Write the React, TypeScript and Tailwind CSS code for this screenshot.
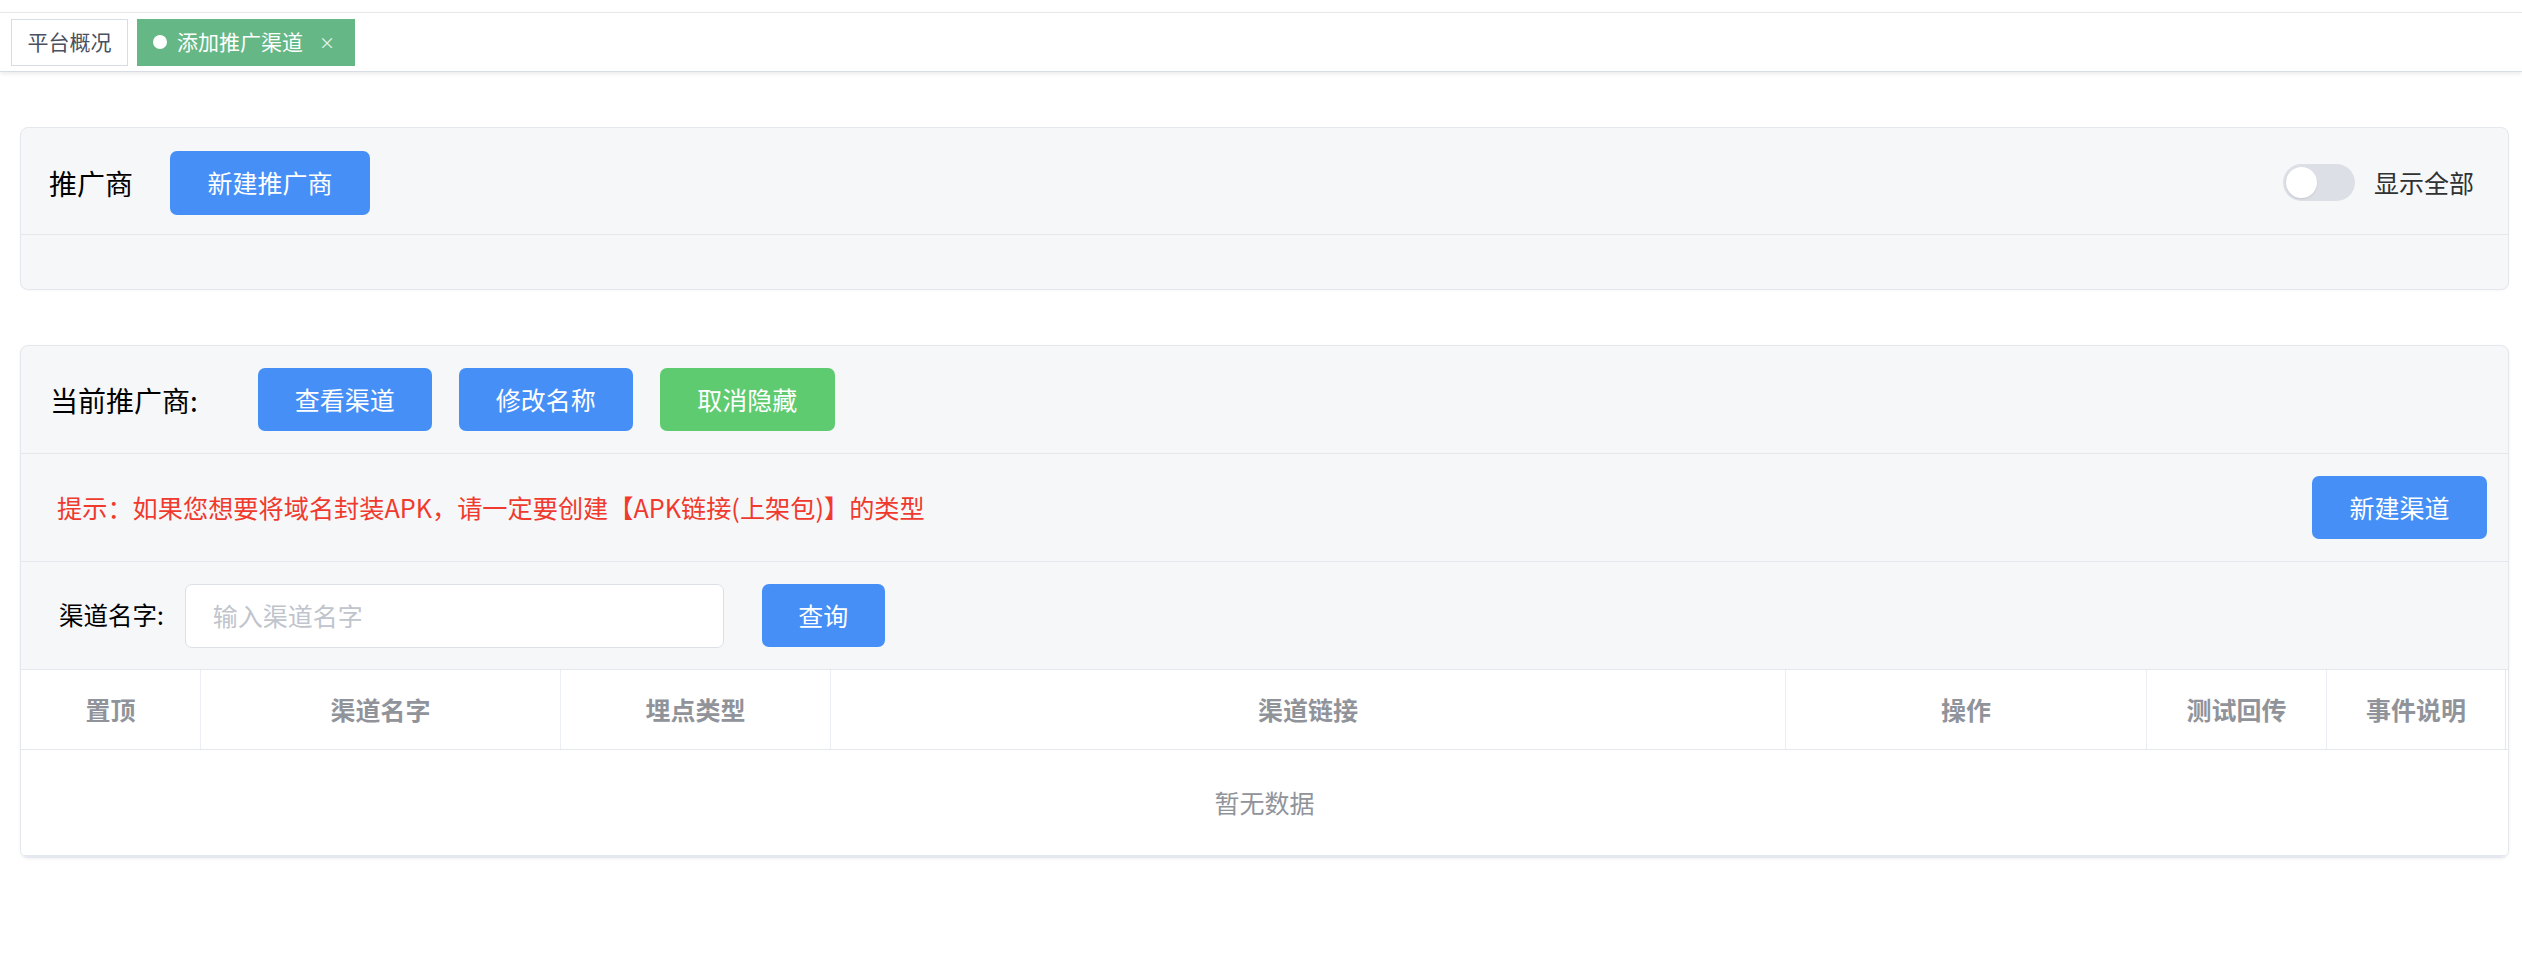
import React from "react";

const FONT = { fontFamily: '"Noto Sans CJK SC", "Noto Sans", sans-serif' };

function Btn({ children, w, color = "blue" }: { children: React.ReactNode; w: string; color?: "blue" | "green" }) {
  return (
    <button
      className={`${w} h-[63px] rounded-[7px] text-white text-[25px] leading-none flex items-center justify-center ${
        color === "blue" ? "bg-[#468ff7]" : "bg-[#5ecb70]"
      }`}
    >
      {children}
    </button>
  );
}

const cols = ["置顶", "渠道名字", "埋点类型", "渠道链接", "操作", "测试回传", "事件说明"];

export default function App() {
  return (
    <div className="w-[2522px] h-[954px] bg-white text-[#000]" style={FONT}>
      <div className="h-3" />
      {/* tab bar */}
      <div className="h-[60px] bg-white border-t border-[#e6e8ec] border-b border-b-[#d8dce5] shadow-[0_2px_4px_rgba(0,0,0,0.08)] flex items-center pl-[11px] gap-[9px]">
        <div className="h-[47px] w-[117px] border border-[#d8dce5] bg-white flex items-center justify-center text-[21px] text-[#495060]">
          平台概况
        </div>
        <div className="h-[47px] w-[218px] bg-[#65b786] flex items-center pl-[16px] text-[21px] text-white">
          <span className="w-[14px] h-[14px] rounded-full bg-white mr-[10px]" />
          <span>添加推广渠道</span>
          <span className="ml-[16px] text-[16px] leading-none text-[#e8f5ed]">×</span>
        </div>
      </div>

      <div className="ml-[20px] mr-[13px] mt-[55px] flex flex-col gap-[55px]">
        {/* card 1 */}
        <div className="border border-[#e4e7ed] rounded-[8px] bg-[#f6f7f9] shadow-[0_1px_2px_rgba(0,0,0,0.03)]">
          <div className="h-[107px] pt-[3px] border-b border-[#e4e7ed] flex items-center pl-[28px] pr-[34px]">
            <span className="text-[28px] leading-none">推广商</span>
            <div className="ml-[37px]">
              <button className="w-[200px] h-[64px] rounded-[7px] bg-[#468ff7] text-white text-[25px] leading-none">新建推广商</button>
            </div>
            <div className="ml-auto flex items-center">
              <div className="w-[72px] h-[37px] rounded-full bg-[#dcdfe6] flex items-center px-[3px]">
                <div className="w-[31px] h-[31px] rounded-full bg-white shadow-[0_1px_2px_rgba(0,0,0,0.1)]" />
              </div>
              <span className="ml-[19px] text-[25px] text-[#303133] leading-none">显示全部</span>
            </div>
          </div>
          <div className="h-[54px]" />
        </div>

        {/* card 2 */}
        <div className="border border-[#e4e7ed] rounded-[8px] bg-[#f6f7f9] shadow-[0_1px_3px_rgba(0,0,0,0.06)] overflow-hidden">
          <div className="h-[108px] border-b border-[#e4e7ed] flex items-center pl-[29px]">
            <span className="text-[28px] leading-none">当前推广商:</span>
            <div className="ml-[60px] flex gap-[27px]">
              <Btn w="w-[174px]">查看渠道</Btn>
              <Btn w="w-[174px]">修改名称</Btn>
              <Btn w="w-[175px]" color="green">取消隐藏</Btn>
            </div>
          </div>
          <div className="h-[108px] border-b border-[#e4e7ed] flex items-center pl-[36px] pr-[21px]">
            <span className="text-[25.2px] text-[#f03a2e] leading-none">
              提示：如果您想要将域名封装APK，请一定要创建【APK链接(上架包)】的类型
            </span>
            <div className="ml-auto">
              <Btn w="w-[175px]">新建渠道</Btn>
            </div>
          </div>
          <div className="h-[108px] border-b border-[#e4e7ed] flex items-center pl-[38px]">
            <span className="text-[24.5px] leading-none">渠道名字:</span>
            <div className="ml-[21px] w-[539px] h-[64px] bg-white border border-[#dcdfe6] rounded-[7px] flex items-center pl-[27px]">
              <span className="text-[25px] text-[#c0c4cc] leading-none">输入渠道名字</span>
            </div>
            <button className="ml-[38px] w-[123px] h-[63px] rounded-[7px] bg-[#468ff7] text-white text-[25px] leading-none">查询</button>
          </div>
          <div className="bg-white">
            <div className="grid grid-cols-[180px_360px_270px_955px_361px_180px_179px_1fr] h-[80px] border-b border-[#e4e7ed]">
              {cols.map((c, i) => (
                <div
                  key={c}
                  className={`flex items-center justify-center text-[25px] font-bold text-[#909399] ${
                    i < 6 ? "border-r border-[#ebeef5]" : "border-r border-[#e4e7ed]"
                  }`}
                >
                  {c}
                </div>
              ))}
              <div />
            </div>
            <div className="h-[107px] border-b-2 border-[#e4e8f0] flex items-center justify-center">
              <span className="text-[25px] text-[#909399]">暂无数据</span>
            </div>
          </div>
        </div>
      </div>
    </div>
  );
}
